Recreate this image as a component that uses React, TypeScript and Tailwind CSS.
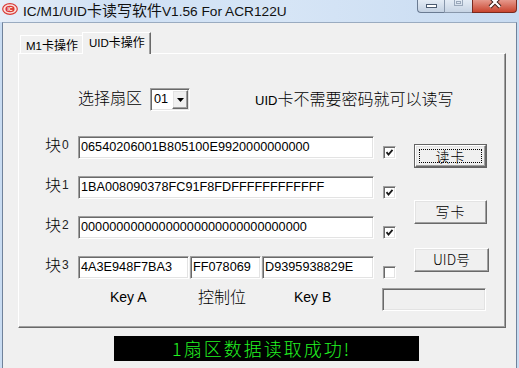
import React from "react";

const sunken =
  "border border-t-[#a0a0a0] border-l-[#a0a0a0] border-r-white border-b-white shadow-[inset_1px_1px_0_#696969,inset_-1px_-1px_0_#e3e3e3]";
const raised =
  "border border-t-white border-l-white border-r-[#696969] border-b-[#696969] shadow-[inset_-1px_-1px_0_#a0a0a0,inset_1px_1px_0_#e3e3e3] bg-[#f0f0f0]";

function Logo() {
  return (
    <svg width="16" height="12" viewBox="0 0 16 12">
      <ellipse cx="8" cy="6" rx="7.3" ry="5.3" fill="#fbe3e0" stroke="#d93a36" strokeWidth="1.2" />
      <ellipse cx="8" cy="6" rx="4.6" ry="3.2" fill="#d93a36" />
      <text x="8" y="7.8" fontSize="5" fill="#fff" textAnchor="middle" fontFamily="Liberation Sans" fontWeight="bold">IC</text>
    </svg>
  );
}

function Check({ checked }: { checked: boolean }) {
  return (
    <div className={`w-[13px] h-[13px] mt-[10px] ml-[9px] bg-white flex items-center justify-center ${sunken}`}>
      {checked && (
        <svg width="9" height="9" viewBox="0 0 9 9">
          <path d="M1.5 4.2 L3.5 6.5 L7.5 1.8" stroke="#1a1a1a" strokeWidth="1.8" fill="none" />
        </svg>
      )}
    </div>
  );
}

function Label({ n }: { n: string }) {
  return (
    <div className="w-[33px] flex items-start">
      <span className="text-[16px] leading-[16px] font-light font-['Noto_Sans_CJK_SC',sans-serif]">块</span>
      <span className="text-[12px] leading-[12px] mt-[3px] ml-[1px] text-[#222]">{n}</span>
    </div>
  );
}

function Field({ w, v }: { w: string; v: string }) {
  return (
    <div className={`${w} h-[23px] bg-white pl-[2px] text-[12.7px] leading-[21px] whitespace-nowrap overflow-hidden ${sunken}`}>
      {v}
    </div>
  );
}

function Btn({ label, w, focused, tight }: { label: string; w: string; focused?: boolean; tight?: boolean }) {
  const text = (
    <span className={`text-[14px] leading-[16px] font-light font-['Noto_Sans_CJK_SC',sans-serif] ${tight ? "" : "tracking-[1px]"}`}>{label}</span>
  );
  if (focused) {
    return (
      <div className={`${w} h-[24px] border border-[#646464]`}>
        <div className={`w-full h-full ${raised} p-[3px]`}>
          <div className="w-full h-full border border-dotted border-black flex items-center justify-center">{text}</div>
        </div>
      </div>
    );
  }
  return <div className={`${w} h-[24px] ${raised} flex items-center justify-center pb-[2px]`}>{text}</div>;
}

export default function App() {
  return (
    <div className="w-[519px] h-[368px] overflow-hidden flex flex-col bg-[#c9dcf2] text-black font-['Liberation_Sans','Noto_Sans_CJK_SC',sans-serif]">
      {/* title bar */}
      <div className="h-[22px] flex bg-[linear-gradient(to_right,#e6eef8_0%,#cfe0f4_22%,#d6e5f6_55%,#c8dbf1_100%)]">
        <div className="flex items-start pl-[2px] pt-[3px]">
          <Logo />
          <span className="ml-[5px] text-[13.7px] leading-[15px] -mt-[1px] text-[#111] whitespace-nowrap">
            IC/M1/UID<span className="text-[15px] font-['Noto_Sans_CJK_SC',sans-serif]">卡读写软件</span>V1.56 For ACR122U
          </span>
        </div>
        <div className="ml-auto mr-[2px] flex h-[13px]">
          <div className="w-[27px] h-full rounded-bl-[4px] border-l border-b border-[#6a7b92] bg-[linear-gradient(#e4ecf5,#c3d1e2)] flex justify-center">
            <div className="mt-[4px] w-[11px] h-[4px] bg-white border border-[#4b5b70]" />
          </div>
          <div className="w-[28px] h-full border-l border-b border-[#8897ab] bg-[linear-gradient(#e4ecf5,#c7d4e4)] flex justify-center">
            <div className="-mt-[2px] w-[9px] h-[8px] border border-[#9aa8ba] flex justify-center">
              <div className="mt-[2px] w-[5px] h-[3px] border border-[#9aa8ba]" />
            </div>
          </div>
          <div className="w-[45px] h-full rounded-br-[4px] border-l border-b border-r border-[#7a2a1f] bg-[linear-gradient(#e6998c,#c9452f)] flex justify-center overflow-hidden">
            <svg width="16" height="12" viewBox="0 0 16 12" className="-mt-[3px]">
              <path d="M3 0 L13 10 M13 0 L3 10" stroke="#3a1a14" strokeWidth="4" />
              <path d="M3 0 L13 10 M13 0 L3 10" stroke="#fff" strokeWidth="2.2" />
            </svg>
          </div>
        </div>
      </div>

      {/* client */}
      <div className="flex-1 flex pl-[2px] pr-[2px]">
        <div className="flex-1 bg-[#f0f0f0] border-l border-r border-t border-l-[#70829a] border-r-[#70829a] border-t-[#9aabc0] flex flex-col items-start">
          <div className="ml-[15px] mt-[9px] flex flex-col">
            {/* tabs */}
            <div className="flex items-end h-[21px] pl-[2px]">
              <div className="w-[62px] h-[18px] border-t border-l border-white pl-[5px] pt-[2px] text-[12px] leading-[14px] font-['Noto_Sans_CJK_SC',sans-serif]">
                <span className="font-['Liberation_Sans'] text-[11.5px]">M1</span>卡操作
              </div>
              <div className="relative z-10 w-[69px] h-[22px] -mb-[1px] bg-[#f0f0f0] border-t border-l border-r border-t-white border-l-white border-r-[#696969] shadow-[inset_-1px_0_0_#a0a0a0] pl-[6px] pt-[2px] text-[12px] leading-[14px] font-['Noto_Sans_CJK_SC',sans-serif]">
                <span className="font-['Liberation_Sans'] text-[11.5px]">UID</span>卡操作
              </div>
            </div>
            {/* panel */}
            <div className={`w-[488px] h-[275px] border border-t-white border-l-white border-r-[#696969] border-b-[#696969] shadow-[inset_-1px_-1px_0_#a0a0a0] flex flex-col`}>
              {/* sector row */}
              <div className="flex mt-[34px] pl-[59px] h-[23px]">
                <span className="w-[72px] text-[16px] leading-[18px] font-light font-['Noto_Sans_CJK_SC',sans-serif]">选择扇区</span>
                <div className={`w-[40px] h-[23px] bg-white flex ${sunken}`}>
                  <span className="pl-[3px] text-[12.7px] leading-[21px]">01</span>
                  <div className={`ml-auto mr-[1px] mt-[1px] w-[16px] h-[19px] ${raised} flex items-center justify-center`}>
                    <svg width="7" height="4" viewBox="0 0 7 4">
                      <path d="M0 0 H7 L3.5 4 Z" fill="#000" />
                    </svg>
                  </div>
                </div>
                <span className="ml-[65px] text-[16px] leading-[20px] font-light font-['Noto_Sans_CJK_SC',sans-serif]">
                  <span className="font-['Liberation_Sans'] font-normal text-[13px]">UID</span>卡不需要密码就可以读写
                </span>
              </div>

              {/* blocks */}
              <div className="flex mt-[25px] pl-[26px]">
                <div className="flex flex-col gap-[17px]">
                  <div className="flex h-[23px]">
                    <Label n="0" />
                    <Field w="w-[296px]" v="06540206001B805100E9920000000000" />
                    <Check checked />
                  </div>
                  <div className="flex h-[23px]">
                    <Label n="1" />
                    <Field w="w-[296px]" v="1BA008090378FC91F8FDFFFFFFFFFFFF" />
                    <Check checked />
                  </div>
                  <div className="flex h-[23px]">
                    <Label n="2" />
                    <Field w="w-[296px]" v="00000000000000000000000000000000" />
                    <Check checked />
                  </div>
                  <div className="flex h-[23px]">
                    <Label n="3" />
                    <div className="flex gap-[1px]">
                      <Field w="w-[111px]" v="4A3E948F7BA3" />
                      <Field w="w-[71px]" v="FF078069" />
                      <Field w="w-[112px]" v="D9395938829E" />
                    </div>
                    <Check checked={false} />
                  </div>
                </div>
                <div className="flex flex-col ml-[18px] pt-[8px]">
                  <Btn label="读卡" w="w-[73px]" focused />
                  <div className="mt-[32px]">
                    <Btn label="写卡" w="w-[73px]" />
                  </div>
                  <div className="mt-[24px]">
                    <Btn label="UID号" w="w-[75px]" tight />
                  </div>
                </div>
              </div>

              {/* key labels */}
              <div className="flex mt-[9px] pl-[91px]">
                <span className="w-[88px] text-[14px] leading-[19px]">Key A</span>
                <span className="w-[96px] text-[16px] leading-[17px] font-light font-['Noto_Sans_CJK_SC',sans-serif]">控制位</span>
                <span className="w-[88px] text-[14px] leading-[19px]">Key B</span>
                <div className={`w-[104px] h-[23px] bg-[#f0f0f0] ${sunken}`} />
              </div>
            </div>
          </div>

          {/* status */}
          <div className="ml-[111px] mt-[8px] w-[305px] h-[25px] bg-black flex items-center pl-[58px] pb-[2px]">
            <span className="text-[18px] leading-[20px] text-[#22f522] font-light font-['Noto_Sans_CJK_SC',sans-serif] tracking-[2px] whitespace-nowrap">
              1扇区数据读取成功!
            </span>
          </div>
        </div>
      </div>
    </div>
  );
}
